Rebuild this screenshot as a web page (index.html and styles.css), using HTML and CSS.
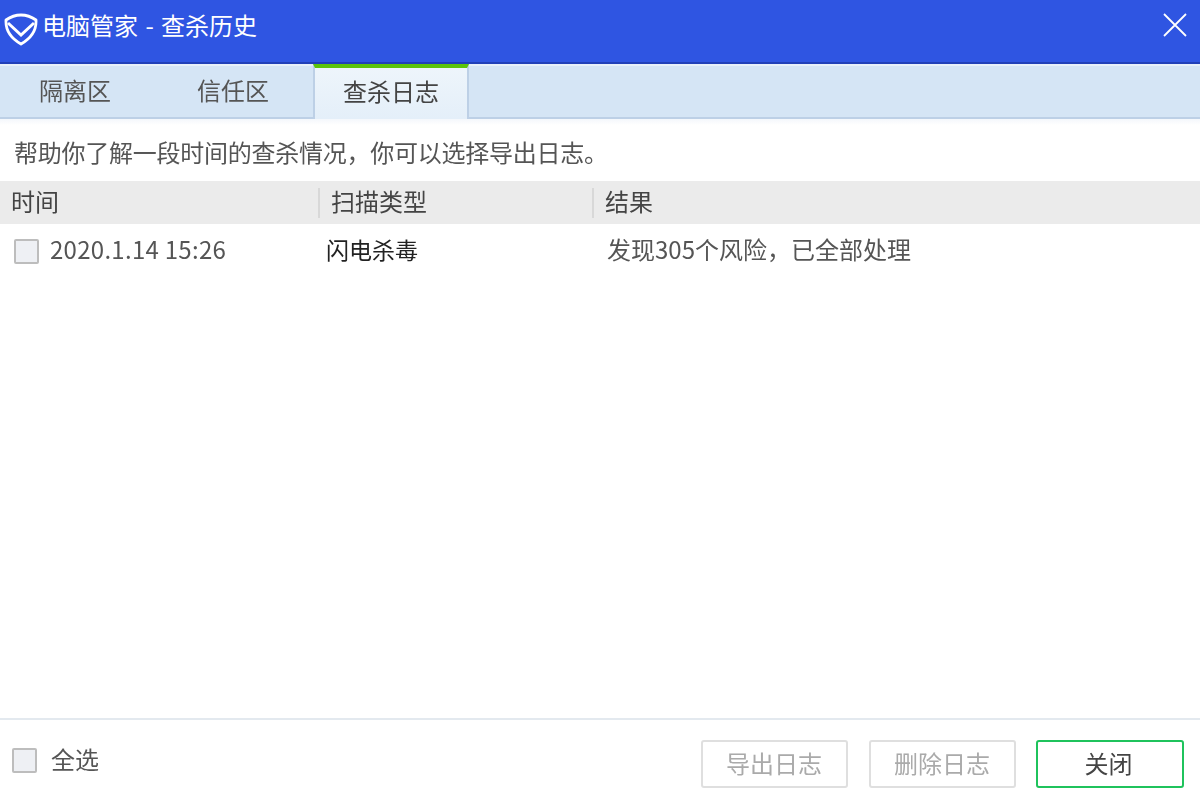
FILE: index.html
```html
<!DOCTYPE html>
<html lang="zh-CN">
<head>
<meta charset="utf-8">
<title>电脑管家 - 查杀历史</title>
<link rel="stylesheet" href="styles.css">
</head>
<body>
<div class="window">
  <header class="titlebar">
    <svg class="logo" viewBox="0 0 34 34" width="34" height="34" aria-hidden="true">
      <path d="M17 3C22 3 27 4.500 32 8C32.500 17 27.500 26 17 32C6.500 26 1.500 17 2 8C7 4.500 12 3 17 3Z" fill="none" stroke="#fff" stroke-width="2.800" stroke-linejoin="round"/>
      <path d="M4 11L17 23L30 11" fill="none" stroke="#fff" stroke-width="3" stroke-linejoin="miter"/>
    </svg>
    <div class="title">电脑管家 - 查杀历史</div>
    <svg class="close" viewBox="0 0 24 24" width="24" height="24" aria-hidden="true">
      <path d="M1 1L23 23M23 1L1 23" stroke="#fff" stroke-width="1.800" fill="none"/>
    </svg>
  </header>
  <nav class="tabs">
    <div class="tab tab-first">隔离区</div>
    <div class="tab tab-second">信任区</div>
    <div class="tab tab-active">查杀日志</div>
  </nav>
  <p class="desc">帮助你了解一段时间的查杀情况，你可以选择导出日志。</p>
  <div class="thead">
    <div class="th th-time">时间</div>
    <div class="th th-type">扫描类型</div>
    <div class="th th-result">结果</div>
  </div>
  <main class="tbody">
    <div class="row">
      <div class="cell cell-time"><span class="check"></span><span class="date">2020.1.14 15:26</span></div>
      <div class="cell cell-type">闪电杀毒</div>
      <div class="cell cell-result">发现305个风险，已全部处理</div>
    </div>
  </main>
  <footer class="footer">
    <label class="selectall"><span class="check"></span><span>全选</span></label>
    <div class="actions">
      <button class="btn btn-disabled">导出日志</button>
      <button class="btn btn-disabled">删除日志</button>
      <button class="btn btn-primary">关闭</button>
    </div>
  </footer>
</div>
</body>
</html>
```
FILE: styles.css
```css
* { box-sizing: border-box; }
html, body { margin: 0; padding: 0; background: #fff; }
body { font-family: "Noto Sans CJK SC", "Liberation Sans", sans-serif; font-size: 24px; color: #444; }
.window { width: 1200px; height: 805px; display: flex; flex-direction: column; overflow: hidden; filter: blur(0.35px); }

.titlebar { height: 64px; flex: none; background: #2f55e2; border-bottom: 2px solid #2140b8; display: flex; align-items: center; padding: 0 13px 8px 4px; }
.logo { flex: none; margin-top: 4px; }
.title { margin-left: 4px; margin-bottom: 4px; color: #fff; font-size: 24px; line-height: 34px; flex: 1; white-space: pre; word-spacing: 2px; }
.close { flex: none; margin-bottom: 4px; }

.tabs { height: 55px; flex: none; display: flex; background: #d5e5f5; border-top: 2px solid #e8f0f9; border-bottom: 2px solid #bdd0e6; }
.tab { line-height: 48px; height: 51px; color: #555; text-align: left; }
.tab-first { width: 158px; padding-left: 39px; }
.tab-second { width: 155px; padding-left: 39px; }
.tab-active { width: 156px; margin-top: -2px; height: 55px; padding-left: 28px; line-height: 46px; background: linear-gradient(#eef5fb, #e4eff9); border-top: 4px solid #5cc40a; border-left: 2px solid #bdd0e6; border-right: 2px solid #bdd0e6; color: #444; }

.desc { margin: 0; height: 62px; flex: none; padding: 0 0 0 14px; line-height: 66px; color: #555; letter-spacing: -0.25px; background: linear-gradient(#f4f7fc, #fff 6px); }

.thead { height: 43px; flex: none; display: flex; background: #ebebeb; color: #444; }
.th { line-height: 39px; }
.th-time { width: 318px; padding-left: 11px; }
.th-type { width: 274px; padding-left: 11px; border-left: 2px solid #d8d8d8; margin-top: 7px; line-height: 25px; height: 30px; }
.th-result { flex: 1; padding-left: 11px; border-left: 2px solid #d8d8d8; margin-top: 7px; line-height: 25px; height: 30px; }

.tbody { flex: 1; min-height: 0; }
.row { display: flex; height: 49px; align-items: center; }
.cell { line-height: 50px; }
.cell-time { width: 326px; display: flex; align-items: center; padding-left: 14px; gap: 11px; color: #555; }
.date { letter-spacing: 0.28px; }
.cell-time .check { margin-top: 5px; }
.cell-type { width: 281px; color: #222; font-size: 23px; }
.cell-result { flex: 1; color: #555; }

.check { display: block; width: 25px; height: 25px; flex: none; background: #eef0f4; border: 2px solid #bdbdbd; border-radius: 2px; }

.footer { height: 87px; flex: none; border-top: 2px solid #e3e9ef; display: flex; align-items: flex-start; justify-content: space-between; padding: 20px 16px 0 12px; }
.selectall { display: flex; align-items: center; gap: 14px; height: 48px; color: #555; margin-top: -6px; }
.selectall .check { margin-top: 4px; }
.actions { display: flex; gap: 21px; }
.btn { width: 147px; height: 48px; padding: 0 1px 3px 0; font: inherit; line-height: 42px; background: #fff; border-radius: 3px; }
.btn-disabled { border: 2px solid #dfdfdf; color: #aaa; }
.btn-primary { width: 148px; margin-left: -1px; padding-right: 3px; border: 2px solid #1fc35c; color: #444; }
```
